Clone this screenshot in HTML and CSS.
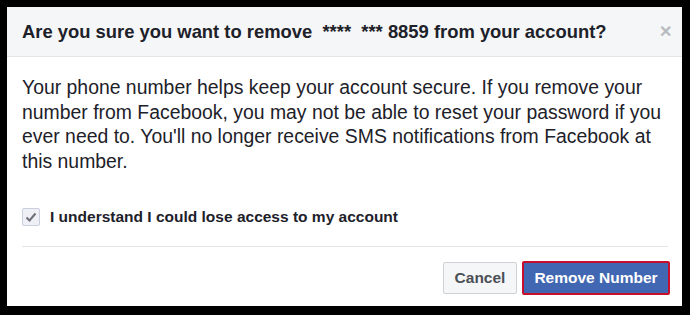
FILE: index.html
```html
<!DOCTYPE html>
<html>
<head>
<meta charset="utf-8">
<link rel="stylesheet" href="styles.css">
</head>
<body>
<div class="dialog">
  <div class="header">
    <h1 class="title">Are you sure you want to remove  ****  *** 8859 from your account?</h1>
    <span class="close">&#x2715;</span>
  </div>
  <div class="content">
    <p class="message">Your phone number helps keep your account secure. If you remove your number from Facebook, you may not be able to reset your password if you ever need to. You'll no longer receive SMS notifications from Facebook at this number.</p>
    <label class="confirm">
      <span class="checkbox">
        <svg width="12" height="12" viewBox="0 0 12 12"><path d="M1.5 6.5 L4.5 9.5 L10.5 2.5" fill="none" stroke="#6d7078" stroke-width="2"/></svg>
      </span>
      <span class="confirm-text">I understand I could lose access to my account</span>
    </label>
  </div>
  <div class="footer">
    <button class="btn btn-cancel">Cancel</button>
    <button class="btn btn-primary">Remove Number</button>
  </div>
</div>
</body>
</html>
```
FILE: styles.css
```css
html, body {
  margin: 0;
  padding: 0;
  background: #000;
  height: 100%;
}
body {
  padding: 7px 8px 9px 7px;
  box-sizing: border-box;
  font-family: "Liberation Sans", Arial, sans-serif;
}
.dialog {
  background: #fff;
  height: 299px;
  display: flex;
  flex-direction: column;
}
.header {
  background: #f5f6f7;
  border-bottom: 1px solid #e5e5e5;
  height: 50px;
  box-sizing: border-box;
  display: flex;
  align-items: center;
  justify-content: space-between;
  padding: 0 10px 0 15px;
}
.title {
  margin: 0;
  font-size: 18.4px;
  font-weight: bold;
  color: #1d2129;
  white-space: pre;
}
.close {
  color: #b8bbc0;
  font-size: 16px;
  font-weight: bold;
}
.content {
  padding: 18px 14px 0 15px;
}
.message {
  margin: 0;
  font-size: 19.4px;
  line-height: 24.6px;
  color: #1d2129;
}
.confirm {
  display: flex;
  align-items: center;
  gap: 10px;
  margin: 35px 0 0 0;
  padding-bottom: 20px;
  border-bottom: 1px solid #e5e5e5;
}
.checkbox {
  width: 16px;
  height: 16px;
  border: 1px solid #c9cfe0;
  border-radius: 2px;
  background: #eef0f5;
  display: flex;
  align-items: center;
  justify-content: center;
}
.confirm-text {
  font-size: 15.5px;
  font-weight: bold;
  color: #1d2129;
}
.footer {
  display: flex;
  justify-content: flex-end;
  align-items: center;
  gap: 5px;
  padding: 14px 12px 0 0;
}
.btn {
  font-family: "Liberation Sans", Arial, sans-serif;
  font-size: 15.5px;
  font-weight: bold;
  height: 32px;
  box-sizing: border-box;
  border-radius: 2px;
  cursor: pointer;
}
.btn-cancel {
  background: #f5f6f7;
  border: 1px solid #ced0d4;
  color: #4b4f56;
  padding: 0 10px;
  width: 74px;
}
.btn-primary {
  background: #4267b2;
  color: #fff;
  border: 2px solid #c8102e;
  padding: 0 8px;
  height: 34px;
  width: 148px;
}
```
